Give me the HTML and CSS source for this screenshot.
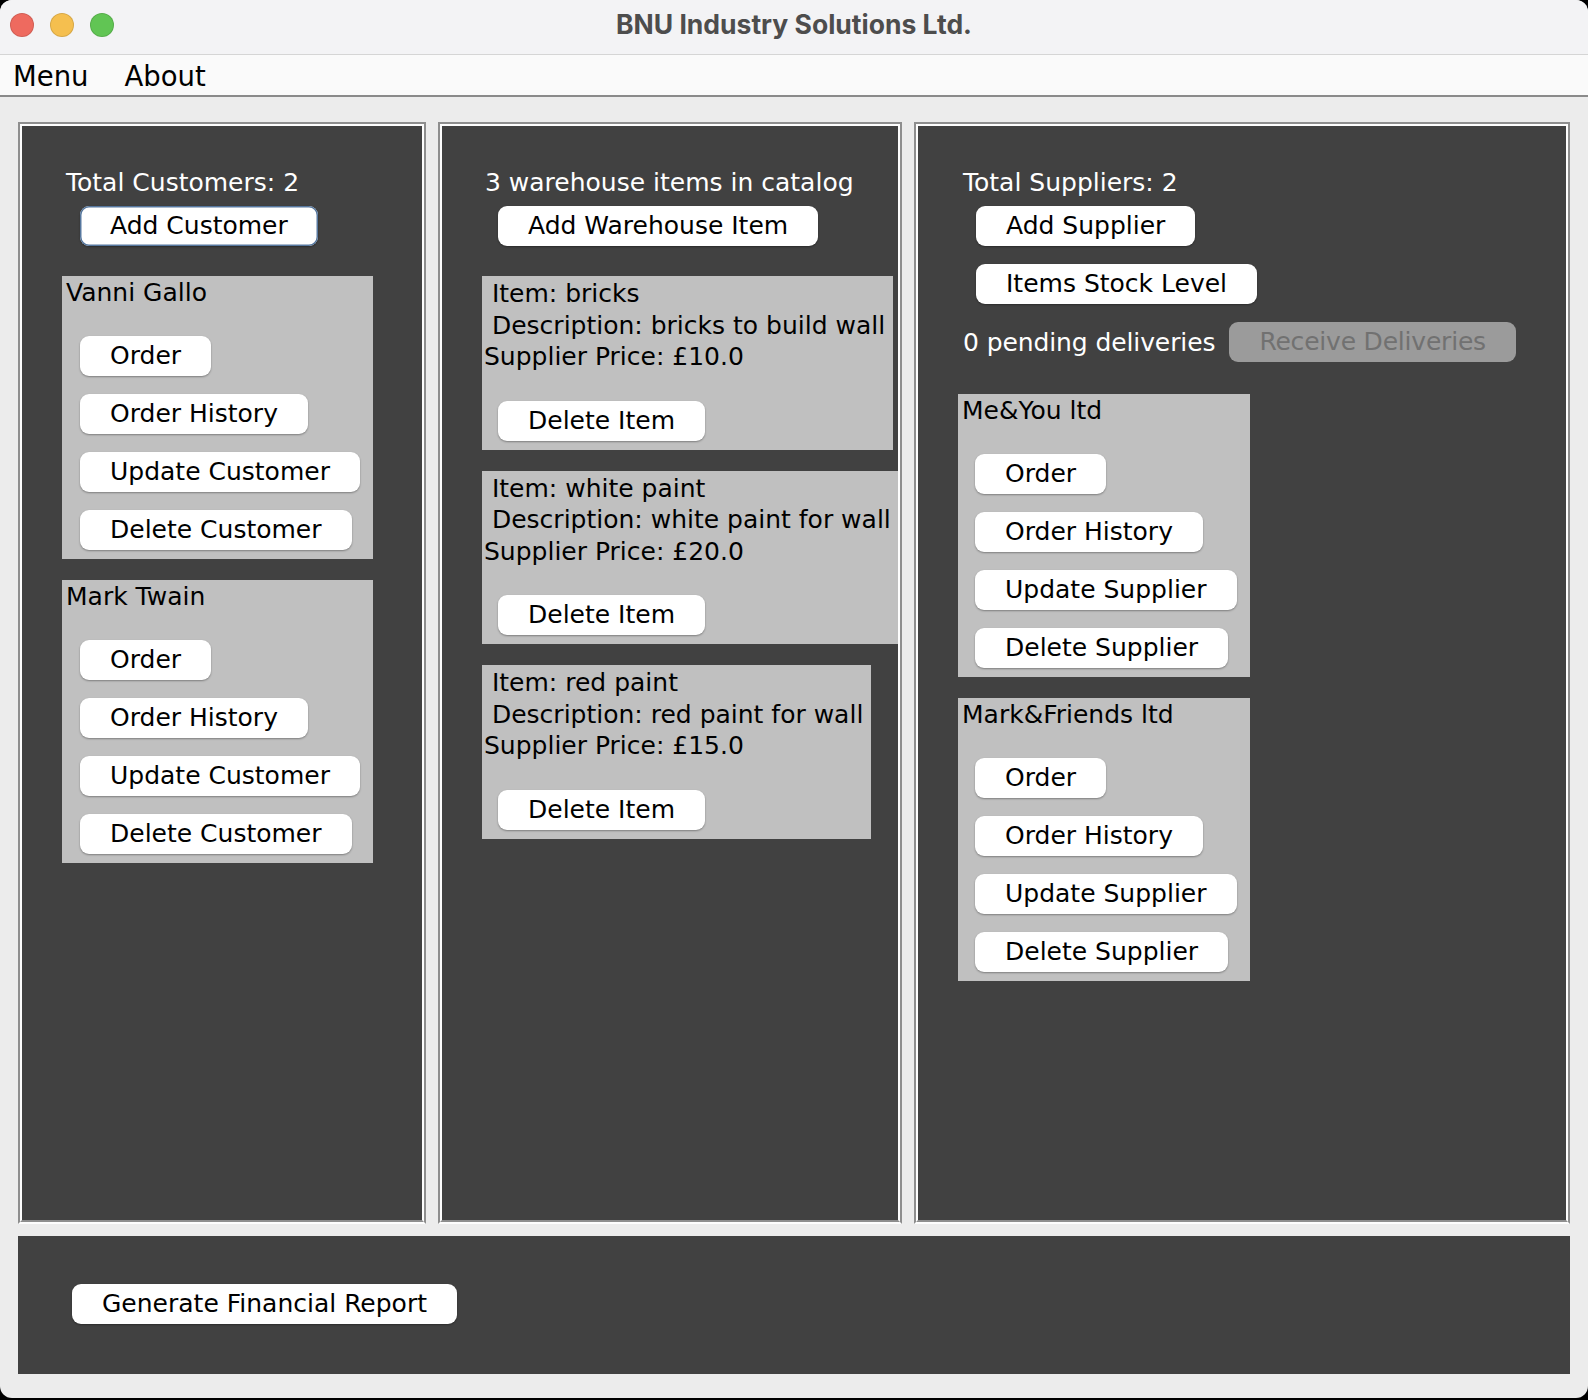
FILE: index.html
```html
<!DOCTYPE html>
<html lang="en">
<head>
<meta charset="utf-8">
<title>BNU Industry Solutions Ltd.</title>
<link rel="stylesheet" href="styles.css">
</head>
<body>
<div class="window">
  <header class="titlebar">
    <div class="lights">
      <span class="light light-close"></span>
      <span class="light light-min"></span>
      <span class="light light-max"></span>
    </div>
    <div class="title">BNU Industry Solutions Ltd.</div>
    <div></div>
  </header>
  <nav class="menubar">
    <span class="menu-item">Menu</span>
    <span class="menu-item">About</span>
  </nav>
  <main class="main">
    <div class="columns">
      <section class="panel">
        <div class="panel-inner panel-customers">
          <div class="count">Total Customers: 2</div>
          <button class="btn btn-default head-btn">Add Customer</button>
          <div class="card">
            <div class="card-name">Vanni Gallo</div>
            <div class="card-actions">
              <button class="btn">Order</button>
              <button class="btn">Order History</button>
              <button class="btn">Update Customer</button>
              <button class="btn">Delete Customer</button>
            </div>
          </div>
          <div class="card">
            <div class="card-name">Mark Twain</div>
            <div class="card-actions">
              <button class="btn">Order</button>
              <button class="btn">Order History</button>
              <button class="btn">Update Customer</button>
              <button class="btn">Delete Customer</button>
            </div>
          </div>
        </div>
      </section>
      <section class="panel">
        <div class="panel-inner panel-items">
          <div class="count">3 warehouse items in catalog</div>
          <button class="btn head-btn">Add Warehouse Item</button>
          <div class="item-card">
            <div class="item-lines"> Item: bricks
 Description: bricks to build wall
Supplier Price: £10.0</div>
            <button class="btn item-btn">Delete Item</button>
          </div>
          <div class="item-card">
            <div class="item-lines"> Item: white paint
 Description: white paint for wall
Supplier Price: £20.0</div>
            <button class="btn item-btn">Delete Item</button>
          </div>
          <div class="item-card">
            <div class="item-lines"> Item: red paint
 Description: red paint for wall
Supplier Price: £15.0</div>
            <button class="btn item-btn">Delete Item</button>
          </div>
        </div>
      </section>
      <section class="panel">
        <div class="panel-inner panel-suppliers">
          <div class="count">Total Suppliers: 2</div>
          <div class="head-stack">
            <button class="btn">Add Supplier</button>
            <button class="btn">Items Stock Level</button>
          </div>
          <div class="pending">
            <span class="pending-text">0 pending deliveries</span>
            <button class="btn btn-receive" disabled>Receive Deliveries</button>
          </div>
          <div class="card">
            <div class="card-name">Me&amp;You ltd</div>
            <div class="card-actions">
              <button class="btn">Order</button>
              <button class="btn">Order History</button>
              <button class="btn">Update Supplier</button>
              <button class="btn">Delete Supplier</button>
            </div>
          </div>
          <div class="card">
            <div class="card-name">Mark&amp;Friends ltd</div>
            <div class="card-actions">
              <button class="btn">Order</button>
              <button class="btn">Order History</button>
              <button class="btn">Update Supplier</button>
              <button class="btn">Delete Supplier</button>
            </div>
          </div>
        </div>
      </section>
    </div>
    <footer class="footer">
      <button class="btn">Generate Financial Report</button>
    </footer>
  </main>
</div>
</body>
</html>
```

FILE: styles.css
```css
* { box-sizing: border-box; }

html, body {
  margin: 0;
  background: #000;
}

body {
  font-family: "DejaVu Sans", sans-serif;
  font-size: 25px;
  color: #000;
}

.window {
  width: 1588px;
  height: 1398px;
  background: #ececec;
  border-radius: 12px;
  overflow: hidden;
  display: flex;
  flex-direction: column;
}

/* Title bar */
.titlebar {
  height: 55px;
  flex: none;
  background: #f3f3f5;
  border-bottom: 1px solid #d5d5d5;
  display: grid;
  grid-template-columns: 1fr auto 1fr;
  align-items: center;
}

.lights {
  display: flex;
  gap: 16px;
  padding-left: 10px;
  padding-bottom: 4px;
}

.light {
  width: 24px;
  height: 24px;
  border-radius: 50%;
  border: 1px solid rgba(0, 0, 0, 0.12);
}

.light-close { background: #ee6a5f; }
.light-min { background: #f5bf4f; }
.light-max { background: #61c554; }

.title {
  font-family: Inter, "DejaVu Sans", sans-serif;
  font-weight: 700;
  font-size: 26.5px;
  color: #4d4d4d;
  padding-bottom: 6px;
}

/* Menu bar */
.menubar {
  height: 42px;
  flex: none;
  background: #fafafa;
  border-bottom: 2px solid #8a8a8a;
  display: flex;
  align-items: center;
  gap: 36px;
  padding-left: 13px;
  padding-top: 2px;
  font-size: 27.5px;
}

/* Main content */
.main {
  padding: 25px 18px 0;
  display: flex;
  flex-direction: column;
  gap: 12px;
}

.columns {
  display: grid;
  grid-template-columns: 408px 464px 656px;
  gap: 12px;
  height: 1102px;
}

.panel {
  border: 2px solid;
  border-color: #8e8e8e #8e8e8e #fdfdfd #8e8e8e;
}

.panel-inner {
  height: 100%;
  border: 2px solid;
  border-color: #fdfdfd #fdfdfd #8e8e8e #fdfdfd;
  background: #414141;
  overflow: hidden;
  padding: 42px 0 0 40px;
  display: flex;
  flex-direction: column;
  align-items: flex-start;
}

.count {
  color: #fff;
  line-height: 30px;
  white-space: nowrap;
  margin-left: 4px;
}

.panel-items .count { margin-left: 3px; }
.panel-suppliers .count { margin-left: 5px; }

.head-btn {
  margin-top: 8px;
  margin-left: 18px;
}

.panel-items .head-btn { margin-left: 16px; }

.head-stack {
  margin-top: 8px;
  margin-left: 18px;
  display: flex;
  flex-direction: column;
  align-items: flex-start;
  gap: 18px;
}

.pending {
  margin-top: 18px;
  margin-left: 5px;
  display: flex;
  align-items: center;
  gap: 14px;
}

.pending-text {
  color: #fff;
  white-space: nowrap;
  letter-spacing: -0.1px;
}

/* Buttons */
.btn {
  height: 40px;
  padding: 0 30px;
  border: none;
  border-radius: 9px;
  background: #fff;
  font-family: "DejaVu Sans", sans-serif;
  font-size: 25px;
  line-height: 40px;
  color: #000;
  white-space: nowrap;
  box-shadow: 0 1px 2px rgba(0, 0, 0, 0.35);
}

.btn-default {
  box-shadow: inset 0 0 0 1.5px #56779e, 0 1px 2px rgba(0, 0, 0, 0.35);
}

.btn:disabled {
  background: #9b9b9b;
  color: #717171;
  box-shadow: none;
}

.btn-receive {
  letter-spacing: -0.2px;
}

/* Customer / supplier cards */
.card {
  background: #c0c0c0;
  padding: 2px 13px 9px 0;
  display: flex;
  flex-direction: column;
  align-items: flex-start;
  margin-top: 30px;
}

.card + .card { margin-top: 21px; }
.panel-suppliers .pending + .card { margin-top: 32px; }

.card-name {
  line-height: 30px;
  padding-left: 4px;
  white-space: nowrap;
}

.card-actions {
  margin-top: 28px;
  margin-left: 18px;
  display: flex;
  flex-direction: column;
  align-items: flex-start;
  gap: 18px;
}

.panel-suppliers .card-actions { margin-left: 17px; }

/* Warehouse item cards */
.item-card {
  background: #c0c0c0;
  padding: 2px 8px 9px 2px;
  display: flex;
  flex-direction: column;
  align-items: flex-start;
  margin-top: 30px;
  flex: none;
}

.item-card + .item-card { margin-top: 21px; }

.item-lines {
  white-space: pre;
  line-height: 31.5px;
}

.item-btn {
  margin-top: 28px;
  margin-left: 14px;
}

/* Footer */
.footer {
  height: 138px;
  background: #414141;
  padding: 48px 0 0 54px;
}
```
